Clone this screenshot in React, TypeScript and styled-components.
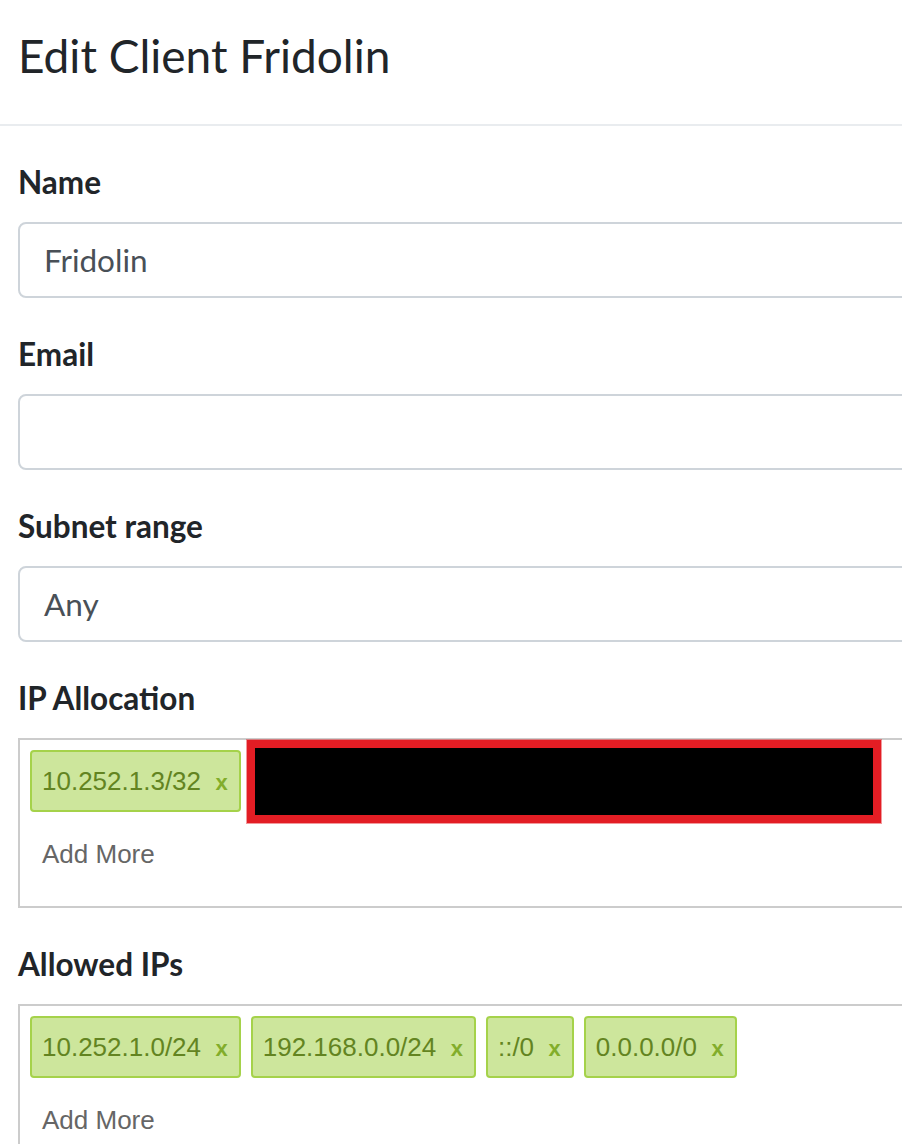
import React from "react";
import styled, { createGlobalStyle } from "styled-components";

const GlobalStyle = createGlobalStyle`
  html, body {
    margin: 0;
    padding: 0;
    background: #ffffff;
    overflow: hidden;
  }
  body {
    font-family: "Lato", "Noto Sans", sans-serif;
    color: #212529;
  }
`;

const Page = styled.div`
  width: 1000px;
`;

const Header = styled.header`
  padding: 20px 0 32px 18px;
  border-bottom: 2px solid #e9ecef;
`;

const Title = styled.h4`
  margin: 0;
  font-size: 46px;
  line-height: 72px;
  font-weight: 400;
  color: #212529;
`;

const Body = styled.div`
  padding: 32px 0 0 18px;
`;

const FormGroup = styled.div`
  margin-bottom: 32px;
`;

const Label = styled.label`
  display: block;
  font-size: 31.5px;
  line-height: 48px;
  font-weight: 700;
  margin-bottom: 16px;
  color: #212529;
`;

const Field = styled.div`
  box-sizing: border-box;
  height: 76px;
  display: flex;
  align-items: center;
  padding: 0 24px;
  border: 2px solid #ced4da;
  border-radius: 8px;
  font-size: 31.5px;
  color: #495057;
`;

const TagBox = styled.div`
  position: relative;
  box-sizing: border-box;
  height: 170px;
  padding: 10px 10px 20px;
  border: 2px solid #cccccc;
  font-family: "Liberation Sans", Arial, sans-serif;
`;

const TagList = styled.div`
  display: flex;
  flex-wrap: wrap;
  align-items: flex-start;
`;

const Tag = styled.span`
  box-sizing: border-box;
  display: inline-block;
  height: 62px;
  padding: 0 11px 0 10px;
  margin: 0 10px 10px 0;
  border: 2px solid #a5d24a;
  border-radius: 4px;
  background: #cde69c;
  color: #638421;
  font-size: 26px;
  line-height: 58px;
  white-space: pre;
`;

const Remove = styled.span`
  font-weight: 700;
  font-size: 22px;
  color: #82ad2b;
`;

const AddMore = styled.div`
  height: 64px;
  line-height: 64px;
  padding-left: 12px;
  font-size: 26px;
  color: #666666;
`;

const Redaction = styled.div`
  position: absolute;
  top: 0;
  left: 227px;
  width: 634px;
  height: 83px;
  box-sizing: border-box;
  border: 8px solid #e31d24;
  background: #000000;
  box-shadow: 0 0 0 1px rgba(227, 29, 36, 0.45);
`;

const TagField: React.FC<{ tags: string[]; redacted?: boolean }> = ({ tags, redacted }) => (
  <TagBox>
    <TagList>
      {tags.map((t) => (
        <Tag key={t}>
          {t + "\u00a0\u00a0"}
          <Remove>x</Remove>
        </Tag>
      ))}
    </TagList>
    <AddMore>Add More</AddMore>
    {redacted && <Redaction />}
  </TagBox>
);

export default function App() {
  return (
    <Page>
      <GlobalStyle />
      <Header>
        <Title>Edit Client Fridolin</Title>
      </Header>
      <Body>
        <FormGroup>
          <Label>Name</Label>
          <Field>Fridolin</Field>
        </FormGroup>
        <FormGroup>
          <Label>Email</Label>
          <Field />
        </FormGroup>
        <FormGroup>
          <Label>Subnet range</Label>
          <Field>Any</Field>
        </FormGroup>
        <FormGroup>
          <Label>IP Allocation</Label>
          <TagField tags={["10.252.1.3/32"]} redacted />
        </FormGroup>
        <FormGroup>
          <Label>Allowed IPs</Label>
          <TagField tags={["10.252.1.0/24", "192.168.0.0/24", "::/0", "0.0.0.0/0"]} />
        </FormGroup>
      </Body>
    </Page>
  );
}
